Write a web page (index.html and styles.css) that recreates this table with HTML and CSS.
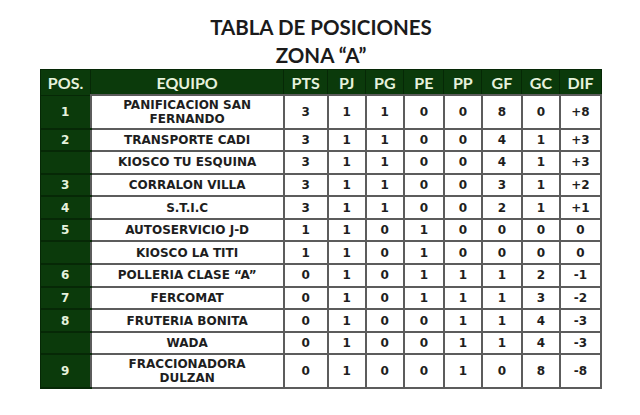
FILE: index.html
```html
<!DOCTYPE html>
<html lang="es">
<head>
<meta charset="utf-8">
<title>Tabla de posiciones</title>
<link rel="stylesheet" href="styles.css">
</head>
<body>
<div class="page">
  <h1 class="title">TABLA DE POSICIONES<br>ZONA “A”</h1>
  <table class="standings">
    <colgroup>
      <col class="c-pos"><col class="c-team"><col class="c-pts"><col class="c-n"><col class="c-n"><col class="c-n2"><col class="c-n"><col class="c-n2"><col class="c-n"><col class="c-dif">
    </colgroup>
    <thead>
      <tr><th>POS.</th><th>EQUIPO</th><th>PTS</th><th>PJ</th><th>PG</th><th>PE</th><th>PP</th><th>GF</th><th>GC</th><th>DIF</th></tr>
    </thead>
    <tbody>
      <tr class="tall"><td class="pos">1</td><td class="team">PANIFICACION SAN<br>FERNANDO</td><td>3</td><td>1</td><td>1</td><td>0</td><td>0</td><td>8</td><td>0</td><td>+8</td></tr>
      <tr><td class="pos">2</td><td class="team">TRANSPORTE CADI</td><td>3</td><td>1</td><td>1</td><td>0</td><td>0</td><td>4</td><td>1</td><td>+3</td></tr>
      <tr><td class="pos"></td><td class="team">KIOSCO TU ESQUINA</td><td>3</td><td>1</td><td>1</td><td>0</td><td>0</td><td>4</td><td>1</td><td>+3</td></tr>
      <tr><td class="pos">3</td><td class="team">CORRALON VILLA</td><td>3</td><td>1</td><td>1</td><td>0</td><td>0</td><td>3</td><td>1</td><td>+2</td></tr>
      <tr><td class="pos">4</td><td class="team">S.T.I.C</td><td>3</td><td>1</td><td>1</td><td>0</td><td>0</td><td>2</td><td>1</td><td>+1</td></tr>
      <tr><td class="pos">5</td><td class="team">AUTOSERVICIO J-D</td><td>1</td><td>1</td><td>0</td><td>1</td><td>0</td><td>0</td><td>0</td><td>0</td></tr>
      <tr><td class="pos"></td><td class="team">KIOSCO LA TITI</td><td>1</td><td>1</td><td>0</td><td>1</td><td>0</td><td>0</td><td>0</td><td>0</td></tr>
      <tr><td class="pos">6</td><td class="team">POLLERIA CLASE “A”</td><td>0</td><td>1</td><td>0</td><td>1</td><td>1</td><td>1</td><td>2</td><td>-1</td></tr>
      <tr><td class="pos">7</td><td class="team">FERCOMAT</td><td>0</td><td>1</td><td>0</td><td>1</td><td>1</td><td>1</td><td>3</td><td>-2</td></tr>
      <tr><td class="pos">8</td><td class="team">FRUTERIA BONITA</td><td>0</td><td>1</td><td>0</td><td>0</td><td>1</td><td>1</td><td>4</td><td>-3</td></tr>
      <tr><td class="pos"></td><td class="team">WADA</td><td>0</td><td>1</td><td>0</td><td>0</td><td>1</td><td>1</td><td>4</td><td>-3</td></tr>
      <tr class="tall"><td class="pos">9</td><td class="team">FRACCIONADORA<br>DULZAN</td><td>0</td><td>1</td><td>0</td><td>0</td><td>1</td><td>0</td><td>8</td><td>-8</td></tr>
    </tbody>
  </table>
</div>
</body>
</html>
```
FILE: styles.css
```css
html, body {
  margin: 0;
  padding: 0;
  background: #ffffff;
}

.page {
  width: 640px;
  height: 415px;
  padding-top: 14px;
  box-sizing: border-box;
  font-family: Lato, "Liberation Sans", sans-serif;
}

.title {
  margin: 0;
  text-align: center;
  font-family: Lato, "Liberation Sans", sans-serif;
  font-weight: 700;
  font-size: 20.5px;
  line-height: 27.5px;
  color: #1b1b1b;
  padding-left: 2px;
}

.standings {
  margin: 0 0 0 40px;
  border-collapse: collapse;
  table-layout: fixed;
  width: 562px;
}

.c-pos { width: 50px; }
.c-team { width: 193px; }
.c-pts { width: 44px; }
.c-n { width: 38px; }
.c-n2 { width: 40px; }
.c-dif { width: 41px; }

.standings th {
  background: #0b3a0b;
  color: #e6f2dc;
  font-family: Lato, "Liberation Sans", sans-serif;
  font-weight: 700;
  font-size: 16px;
  height: 24px;
  padding: 0;
  border: 1px solid #062806;
  text-align: center;
  vertical-align: middle;
}

.standings td {
  border: 2px solid #5c5c5c;
  height: 20.6px;
  padding: 0;
  text-align: center;
  vertical-align: middle;
  font-family: "DejaVu Sans", Verdana, sans-serif;
  font-weight: 700;
  font-size: 12px;
  line-height: 14px;
  color: #1e1e1e;
  background: #ffffff;
}

.standings tr.tall td {
  height: 31.5px;
}

.standings td.pos {
  background: #0b3a0b;
  color: #e6f2dc;
  border: 1px solid #062806;
  border-bottom: 2px solid #062806;
}
```
